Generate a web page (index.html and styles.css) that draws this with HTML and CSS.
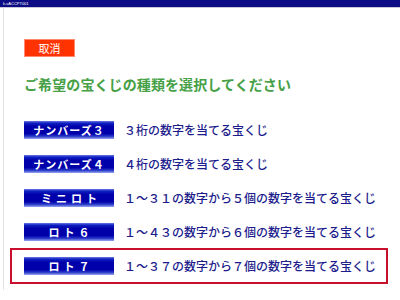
FILE: index.html
```html
<!DOCTYPE html>
<html lang="ja">
<head>
<meta charset="utf-8">
<link rel="stylesheet" href="styles.css">
</head>
<body>
<div class="topbar"><span class="topbar-id">k-vACCPT001</span></div>
<div class="page">
  <div class="cancel">取消</div>
  <h1 class="heading">ご希望の宝くじの種類を選択してください</h1>
  <div class="list">
    <div class="row"><div class="btn">ナンバーズ３</div><div class="desc">３桁の数字を当てる宝くじ</div></div>
    <div class="row"><div class="btn">ナンバーズ４</div><div class="desc">４桁の数字を当てる宝くじ</div></div>
    <div class="row"><div class="btn wide">ミニロト</div><div class="desc">１～３１の数字から５個の数字を当てる宝くじ</div></div>
    <div class="row"><div class="btn wide">ロト６</div><div class="desc">１～４３の数字から６個の数字を当てる宝くじ</div></div>
    <div class="row selected"><div class="btn wide">ロト７</div><div class="desc">１～３７の数字から７個の数字を当てる宝くじ</div></div>
  </div>
</div>
</body>
</html>
```
FILE: styles.css
```css
html, body {
  margin: 0;
  padding: 0;
  background: #ffffff;
  width: 400px;
  height: 300px;
  overflow: hidden;
  font-family: "Noto Sans CJK JP", "Noto Sans", sans-serif;
}
.topbar {
  height: 7px;
  background: #0c0c86;
  border-bottom: 1px solid #c8c8d8;
  display: flex;
  align-items: center;
  padding-left: 3px;
}
.topbar-id {
  color: #ffffff;
  font-family: "Liberation Sans", sans-serif;
  font-size: 4px;
  line-height: 5px;
}
.page {
  margin-left: 3px;
  border-left: 1px solid #e4e4e4;
  height: 282px;
  padding-left: 20px;
  display: flex;
  flex-direction: column;
  align-items: flex-start;
}
.cancel {
  margin-top: 31px;
  width: 51px;
  height: 18px;
  box-sizing: border-box;
  background: #ff3300;
  border: 1px solid #ff8a70;
  color: #ffffff;
  font-size: 11px;
  line-height: 16px;
  text-align: center;
}
.heading {
  margin: 19px 0 0 0;
  font-size: 14px;
  line-height: 16px;
  font-weight: bold;
  color: #46a046;
  letter-spacing: 0.1px;
  white-space: nowrap;
}
.list {
  margin-top: 29px;
  display: flex;
  flex-direction: column;
  gap: 16px;
}
.row {
  display: flex;
  align-items: center;
  gap: 10px;
}
.btn {
  width: 90px;
  height: 18px;
  box-sizing: border-box;
  background: linear-gradient(#6a7ae6 0, #1020c0 12%, #0000aa 30%, #0000aa 70%, #2838c8 85%, #98a8f0 100%);
  color: #ffffff;
  font-size: 11px;
  line-height: 18px;
  text-align: center;
  letter-spacing: 1px;
  font-weight: bold;
  flex: none;
}
.btn.wide {
  letter-spacing: 4px;
  padding-left: 4px;
}
.desc {
  color: #1c1c8c;
  font-size: 12px;
  line-height: 18px;
  font-weight: 500;
  white-space: nowrap;
}
.selected {
  margin-left: -14px;
  width: 378px;
  box-sizing: border-box;
  border: 2px solid #c8102e;
  padding: 7px 12px;
  margin-top: -9px;
}
```
